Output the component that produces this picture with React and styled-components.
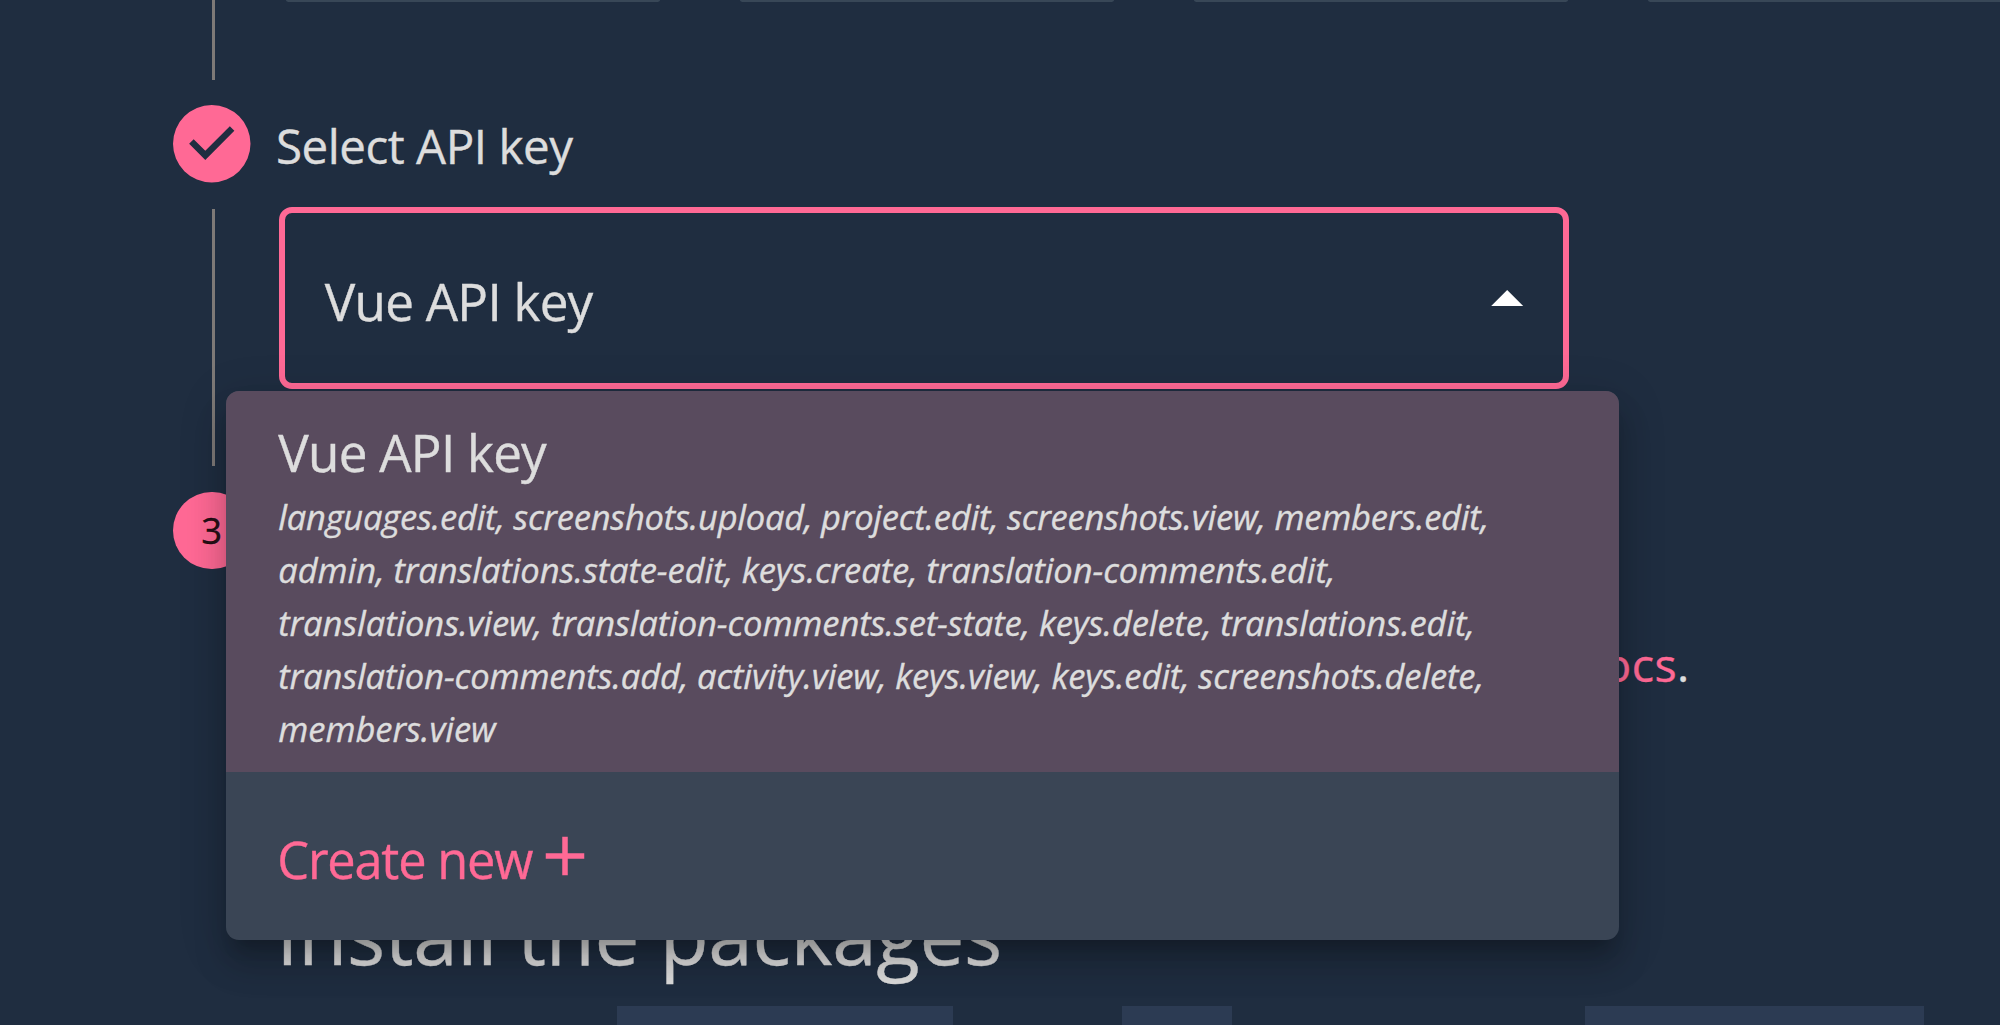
import React from "react";
import styled, { createGlobalStyle } from "styled-components";

const color = {
  background: "#1f2d40",
  primary: "#ff6995",
  text: "#dddddd",
  connector: "#7d7977",
  card: "#384757",
  menu: "#3a4555",
  selected: "#594b5e",
  code: "#2c3b53",
};

const GlobalStyle = createGlobalStyle`
  * { box-sizing: border-box; }
  body { margin: 0; background: ${color.background}; }
`;

const Page = styled.main`
  width: 2000px;
  height: 1025px;
  overflow: hidden;
  padding-left: 173px;
  display: flex;
  flex-direction: column;
  background: ${color.background};
  color: ${color.text};
  font-family: "Open Sans", "Noto Sans", sans-serif;
  -webkit-text-stroke: 0.4px currentColor;
`;

const StepContent = styled.section`
  flex: none;
  height: ${(p) => p.$height}px;
  margin-left: 38.7px;
  padding-left: 65.6px;
  border-left: 3.3px solid ${(p) => (p.$last ? "transparent" : color.connector)};
`;

const StepHeader = styled.header`
  flex: none;
  display: flex;
  align-items: center;
  gap: 25.5px;
  height: ${(p) => p.$height}px;
`;

const StepLabel = styled.h2`
  margin: 0;
  padding-top: 4px;
  font-size: 47.5px;
  font-weight: 400;
  line-height: 64px;
  letter-spacing: -0.47px;
`;

const CheckIcon = styled.svg`
  flex: none;
  width: 77.5px;
  height: 77.5px;
  fill: ${color.primary};
`;

const StepNumber = styled.span`
  flex: none;
  display: flex;
  align-items: center;
  justify-content: center;
  width: 77.5px;
  height: 77.5px;
  padding-bottom: 2px;
  border-radius: 50%;
  background: ${color.primary};
  color: rgba(0, 0, 0, 0.87);
  font-size: 36.5px;
  line-height: 50px;
`;

const CardRow = styled.div`
  display: flex;
  gap: 80px;
  height: 2px;
  padding-left: 6px;
`;

const CardEdge = styled.div`
  flex: none;
  width: 374px;
  background: ${color.card};
  border-radius: 0 0 4px 4px / 0 0 2px 2px;
`;

const SelectField = styled.div`
  position: relative;
  width: 1290px;
  height: 182.7px;
  margin: -2px 0 0 -1px;
`;

const SelectBox = styled.div`
  display: flex;
  align-items: center;
  justify-content: space-between;
  height: 100%;
  padding: 0 39.5px;
  border: 6.5px solid ${color.primary};
  border-radius: 13px;
`;

const ItemName = styled.span`
  font-size: 51.2px;
  line-height: 77px;
  letter-spacing: -0.75px;
`;

const SelectValue = styled(ItemName)`
  padding-top: 8px;
`;

const Caret = styled.svg`
  width: 32.4px;
  height: 16.2px;
  fill: #fff;
`;

const Menu = styled.div`
  position: absolute;
  z-index: 2;
  top: 184px;
  left: -53px;
  width: 1392.4px;
  border-radius: 13px;
  background: ${color.menu};
  box-shadow:
    0 16px 16px -10px rgba(0, 0, 0, 0.2),
    0 26px 32px 3px rgba(0, 0, 0, 0.14),
    0 10px 45px 6px rgba(0, 0, 0, 0.12);
`;

const SelectedItem = styled.div`
  display: flex;
  flex-direction: column;
  height: 381.8px;
  padding: 23px 52px 16px;
  border-radius: 13px 13px 0 0;
  background: ${color.selected};
`;

const Scopes = styled.div`
  display: flex;
  flex-direction: column;
  margin-top: -1px;
  font-size: 34.5px;
  font-style: italic;
  line-height: 53.1px;
  white-space: nowrap;
`;

const ScopeLine = styled.span`
  letter-spacing: ${(p) => p.$tracking}px;
`;

const CreateItem = styled.div`
  display: flex;
  align-items: center;
  height: 167.7px;
  padding-left: 51px;
  color: ${color.primary};
`;

const CreateLabel = styled.span`
  padding-top: 6px;
  font-size: 50.5px;
  line-height: 77px;
  letter-spacing: -1.2px;
`;

const PlusIcon = styled.svg`
  width: 66px;
  height: 66px;
  fill: currentColor;
`;

const DocsNote = styled.p`
  display: flex;
  justify-content: flex-end;
  width: 1409.5px;
  margin: 0;
  padding-top: 34px;
  font-size: 46.5px;
  line-height: 70px;
  letter-spacing: 0.5px;
`;

const DocsLink = styled.a`
  color: ${color.primary};
`;

const Heading = styled.h3`
  margin: 175px 0 0 -4px;
  font-size: 80px;
  font-weight: 400;
  line-height: 120px;
  letter-spacing: -0.3px;
`;

const CodeRow = styled.div`
  display: flex;
  height: 40px;
  margin-top: 12px;
  padding-left: 337px;
`;

const CodeBlock = styled.div`
  flex: none;
  width: ${(p) => p.$width}px;
  margin-right: ${(p) => p.$after || 0}px;
  background: ${color.code};
`;

const scopeLines = [
  { text: "languages.edit, screenshots.upload, project.edit, screenshots.view, members.edit,", tracking: -0.23 },
  { text: "admin, translations.state-edit, keys.create, translation-comments.edit,", tracking: -0.07 },
  { text: "translations.view, translation-comments.set-state, keys.delete, translations.edit,", tracking: -0.09 },
  { text: "translation-comments.add, activity.view, keys.view, keys.edit, screenshots.delete,", tracking: -0.11 },
  { text: "members.view", tracking: -0.05 },
];

function ApiKeyMenu() {
  return (
    <Menu>
      <SelectedItem>
        <ItemName>Vue API key</ItemName>
        <Scopes>
          {scopeLines.map((line) => (
            <ScopeLine key={line.text} $tracking={line.tracking}>
              {line.text}
            </ScopeLine>
          ))}
        </Scopes>
      </SelectedItem>
      <CreateItem>
        <CreateLabel>Create new</CreateLabel>
        <PlusIcon viewBox="0 0 24 24">
          <path d="M19 13h-6v6h-2v-6H5v-2h6V5h2v6h6v2z" />
        </PlusIcon>
      </CreateItem>
    </Menu>
  );
}

export default function App() {
  return (
    <>
      <GlobalStyle />
      <Page>
        <StepContent $height={79.5}>
          <CardRow>
            <CardEdge />
            <CardEdge />
            <CardEdge />
            <CardEdge />
          </CardRow>
        </StepContent>

        <StepHeader $height={129}>
          <CheckIcon viewBox="0 0 24 24">
            <path d="M12 0a12 12 0 1 0 0 24 12 12 0 0 0 0-24zm-2 17l-5-5 1.4-1.4 3.6 3.6 7.6-7.6L19 8l-9 9z" />
          </CheckIcon>
          <StepLabel>Select API key</StepLabel>
        </StepHeader>

        <StepContent $height={257.5}>
          <SelectField>
            <SelectBox>
              <SelectValue>Vue API key</SelectValue>
              <Caret viewBox="0 0 10 5">
                <path d="M0 5l5-5 5 5z" />
              </Caret>
            </SelectBox>
            <ApiKeyMenu />
          </SelectField>
        </StepContent>

        <StepHeader $height={129.4}>
          <StepNumber>3</StepNumber>
        </StepHeader>

        <StepContent $height={450} $last>
          <DocsNote>
            <DocsLink>docs</DocsLink>.
          </DocsNote>
          <Heading>Install the packages</Heading>
          <CodeRow>
            <CodeBlock $width={336} $after={169} />
            <CodeBlock $width={110} $after={353} />
            <CodeBlock $width={339} />
          </CodeRow>
        </StepContent>
      </Page>
    </>
  );
}
